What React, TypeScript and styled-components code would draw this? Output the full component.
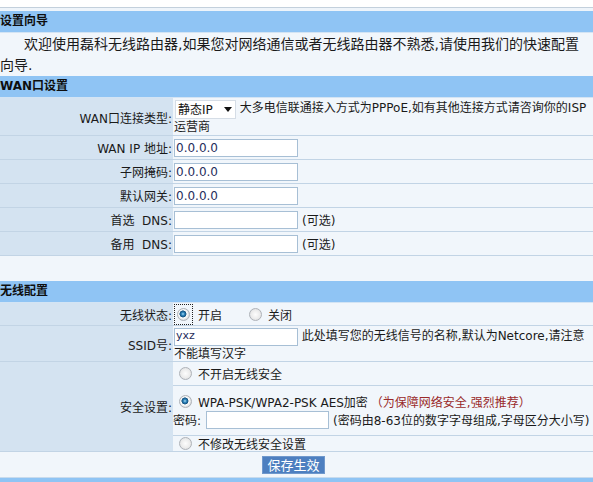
import * as React from 'react';
import styled, { createGlobalStyle } from 'styled-components';

const GlobalStyle = createGlobalStyle`
  html, body {
    margin: 0;
    padding: 0;
    background: #ffffff;
  }
  body {
    width: 593px;
    height: 482px;
    overflow: hidden;
    font-family: "DejaVu Sans", "Noto Sans CJK SC", sans-serif;
    font-size: 12px;
    color: #1a1a1a;
  }
`

const Page = styled.div`
  padding-top: 7px;
`

const TopEdge = styled.div`
  height: 3px;
  border-top: 1px solid #c3d0dc;
  background: #eef4fa;
`

const SectionBar = styled.div`
  height: 21px;
  line-height: 21px;
  background: #8fc4f4;
  border-bottom: 1px solid #d3e4f4;
  font-weight: bold;
  font-size: 12px;
  color: #0e0e0e;
  overflow: hidden;
`

const Welcome = styled.p`
  margin: 0;
  height: 43px;
  box-sizing: border-box;
  padding: 1px 12px 0 0;
  background: #f1f6fb;
  font-size: 14px;
  line-height: 21px;
  text-indent: 24px;
`

const FormRow = styled.div<{ $height: number }>`
  display: grid;
  grid-template-columns: 173px 1fr;
  height: ${p => p.$height}px;
  box-sizing: border-box;
  border-bottom: 1px solid #c2d4e5;
  overflow: hidden;
`

const Label = styled.div`
  background: #d4e3f1;
  display: flex;
  align-items: center;
  justify-content: flex-end;
  padding-right: 1px;
  white-space: pre;
`

const Value = styled.div`
  background: #f1f6fb;
  display: flex;
  align-items: center;
  padding-left: 1px;
  white-space: nowrap;
`

const FlowValue = styled.div`
  background: #f1f6fb;
  padding: 2px 0 0 1px;
  line-height: 17px;
`

const StackValue = styled.div`
  background: #f1f6fb;
  display: flex;
  flex-direction: column;
`

const SubRow = styled.div<{ $height: number }>`
  height: ${p => p.$height}px;
  box-sizing: border-box;
  border-bottom: 1px solid #c2d4e5;
  display: flex;
  flex-direction: column;
  justify-content: center;
  &:last-child {
    border-bottom: none;
  }
`

const OptionLine = styled.div`
  display: flex;
  align-items: center;
  height: 17px;
  white-space: nowrap;
`

const PasswordLine = styled.div`
  display: flex;
  align-items: center;
  height: 18px;
  white-space: nowrap;
  margin-top: 1px;
`

const BlankRow = styled.div`
  height: 25px;
  background: #f1f6fb;
`

const SaveRow = styled.div`
  height: 25px;
  box-sizing: border-box;
  background: #f1f6fb;
  display: flex;
  align-items: center;
  justify-content: center;
  padding-right: 6px;
`

const SaveButton = styled.button`
  width: 63px;
  height: 18px;
  margin: 0;
  padding: 0;
  border: 1px solid #6f98cc;
  background: #4d7fc0;
  color: #ffffff;
  font-family: "Noto Sans CJK SC", sans-serif;
  font-size: 13px;
  line-height: 16px;
`

const BottomBar = styled.div`
  height: 4px;
  border-top: 1px solid #c8dbed;
  background: #8fc4f4;
`

const TextInput = styled.input<{ $width?: number; $small?: boolean }>`
  width: ${p => p.$width ?? 124}px;
  height: 18px;
  box-sizing: border-box;
  margin: 0;
  padding: ${p => (p.$small ? '0 1px 4px' : '0 1px')};
  border: 1px solid #a7bfd5;
  background: #ffffff;
  font-family: "DejaVu Sans", sans-serif;
  font-size: ${p => (p.$small ? 11 : 12)}px;
  color: #1f2d5c;
  outline: none;
  vertical-align: top;
`

const SelectWrap = styled.span`
  position: relative;
  display: inline-block;
  vertical-align: top;
  margin-left: 1px;
`

const Select = styled.select`
  appearance: none;
  -webkit-appearance: none;
  display: block;
  width: 61px;
  height: 19px;
  margin: 0;
  padding: 0 0 0 2px;
  border: 1px solid #d5dde6;
  border-radius: 0;
  background: #ffffff;
  font-family: "DejaVu Sans", "Noto Sans CJK SC", sans-serif;
  font-size: 12px;
  color: #111111;
`

const SelectArrow = styled.svg`
  position: absolute;
  right: 4px;
  top: 7px;
  pointer-events: none;
`

const Radio = styled.input.attrs({ type: 'radio' })`
  appearance: none;
  -webkit-appearance: none;
  flex: none;
  width: 13px;
  height: 13px;
  margin: 0;
  border-radius: 50%;
  box-sizing: border-box;
  border: 1px solid #aeb2b8;
  background: radial-gradient(circle at 50% 50%, #fdfdfd 0%, #ececec 55%, #d3d6da 100%);
  &:checked {
    background: radial-gradient(circle at 45% 45%, #a8dcf4 0px, #2f84bb 1.6px, #134f7c 3.2px, #ffffff 3.8px, #eeeeee 5px, #d3d6da 6.5px);
  }
`

const FocusRing = styled.span`
  display: inline-flex;
  padding: 3px 2px;
  border: 1px dotted #222222;
`

const OptionText = styled.span<{ $gap?: number }>`
  margin-left: ${p => p.$gap ?? 6}px;
`

const RadioSpaced = styled(Radio)<{ $gap: number }>`
  margin-left: ${p => p.$gap}px;
`

const Hint = styled.span`
  margin-left: 4px;
`

const Warn = styled.span`
  margin-left: 3px;
  color: #9a2a2a;
`

export default function App() {
  return (
    <Page>
      <GlobalStyle />
      <TopEdge />

      <SectionBar>设置向导</SectionBar>
      <Welcome>
        欢迎使用磊科无线路由器,如果您对网络通信或者无线路由器不熟悉,请使用我们的快速配置向导.
      </Welcome>

      <SectionBar>WAN口设置</SectionBar>
      <FormRow $height={38}>
        <Label>WAN口连接类型:</Label>
        <FlowValue>
          <SelectWrap>
            <Select defaultValue="static">
              <option value="static">静态IP</option>
              <option value="pppoe">PPPoE</option>
              <option value="dhcp">动态IP</option>
            </Select>
            <SelectArrow width="8" height="5" viewBox="0 0 8 5">
              <path d="M0 0 H8 L4 5 Z" fill="#111" />
            </SelectArrow>
          </SelectWrap>{' '}
          大多电信联通接入方式为PPPoE,如有其他连接方式请咨询你的ISP<br />运营商
        </FlowValue>
      </FormRow>
      <FormRow $height={24}>
        <Label>WAN IP 地址:</Label>
        <Value><TextInput defaultValue="0.0.0.0" /></Value>
      </FormRow>
      <FormRow $height={24}>
        <Label>子网掩码:</Label>
        <Value><TextInput defaultValue="0.0.0.0" /></Value>
      </FormRow>
      <FormRow $height={24}>
        <Label>默认网关:</Label>
        <Value><TextInput defaultValue="0.0.0.0" /></Value>
      </FormRow>
      <FormRow $height={24}>
        <Label>首选  DNS:</Label>
        <Value><TextInput /><Hint>(可选)</Hint></Value>
      </FormRow>
      <FormRow $height={24}>
        <Label>备用  DNS:</Label>
        <Value><TextInput /><Hint>(可选)</Hint></Value>
      </FormRow>
      <BlankRow />

      <SectionBar>无线配置</SectionBar>
      <FormRow $height={23}>
        <Label>无线状态:</Label>
        <Value>
          <FocusRing><Radio name="wl" defaultChecked /></FocusRing>
          <OptionText $gap={5}>开启</OptionText>
          <RadioSpaced name="wl" $gap={27} />
          <OptionText>关闭</OptionText>
        </Value>
      </FormRow>
      <FormRow $height={36}>
        <Label>SSID号:</Label>
        <FlowValue>
          <TextInput defaultValue="yxz" $small />{' '}
          此处填写您的无线信号的名称,默认为Netcore,请注意<br />不能填写汉字
        </FlowValue>
      </FormRow>
      <FormRow $height={90}>
        <Label>安全设置:</Label>
        <StackValue>
          <SubRow $height={24}>
            <OptionLine>
              <RadioSpaced name="sec" $gap={6} />
              <OptionText>不开启无线安全</OptionText>
            </OptionLine>
          </SubRow>
          <SubRow $height={50}>
            <OptionLine>
              <RadioSpaced name="sec" $gap={6} defaultChecked />
              <OptionText>WPA-PSK/WPA2-PSK AES加密</OptionText>
              <Warn>（为保障网络安全,强烈推荐）</Warn>
            </OptionLine>
            <PasswordLine>
              密码:
              <TextInput type="text" $width={123} style={{ marginLeft: 5 }} />
              <Hint>(密码由8-63位的数字字母组成,字母区分大小写)</Hint>
            </PasswordLine>
          </SubRow>
          <SubRow $height={15}>
            <OptionLine>
              <RadioSpaced name="sec" $gap={6} />
              <OptionText>不修改无线安全设置</OptionText>
            </OptionLine>
          </SubRow>
        </StackValue>
      </FormRow>
      <SaveRow>
        <SaveButton>保存生效</SaveButton>
      </SaveRow>
      <BottomBar />
    </Page>
  );
}
